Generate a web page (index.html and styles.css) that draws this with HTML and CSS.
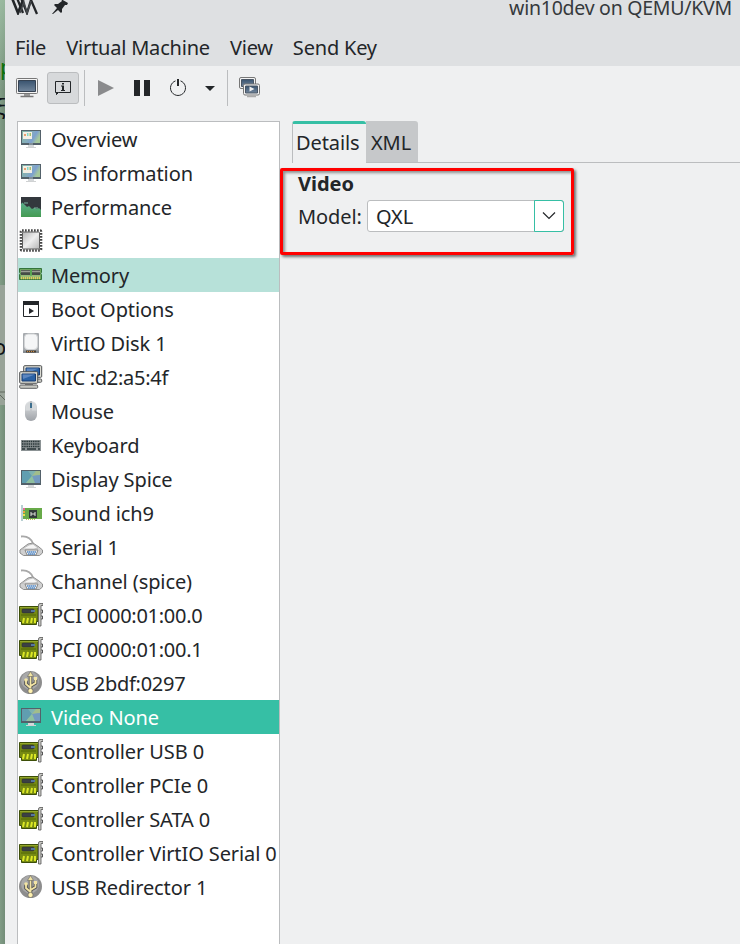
FILE: index.html
```html
<!DOCTYPE html>
<html lang="en">
<head>
<meta charset="utf-8">
<title>win10dev on QEMU/KVM</title>
<link rel="stylesheet" href="styles.css">
</head>
<body>
<svg class="defs" aria-hidden="true">
  <defs>
    <linearGradient id="screen" x1="0" y1="0" x2="1" y2="1"><stop offset="0" stop-color="#6aaab2"/><stop offset=".5" stop-color="#86b5b0"/><stop offset="1" stop-color="#9178ad"/></linearGradient>
    <linearGradient id="wide" x1="0" y1="0" x2="1" y2=".4"><stop offset="0" stop-color="#7fb4a4"/><stop offset=".5" stop-color="#86aebb"/><stop offset=".75" stop-color="#7da0d0"/><stop offset="1" stop-color="#a5c89c"/></linearGradient>
    <linearGradient id="blue" x1="0" y1="0" x2="0" y2="1"><stop offset="0" stop-color="#39536f"/><stop offset="1" stop-color="#71859b"/></linearGradient>
    <linearGradient id="metal" x1="0" y1="0" x2="1" y2="1"><stop offset="0" stop-color="#b5b5b5"/><stop offset=".5" stop-color="#eee"/><stop offset="1" stop-color="#b5b5b5"/></linearGradient>
    <linearGradient id="perf" x1="0" y1="0" x2="0" y2="1"><stop offset="0" stop-color="#5cae8d"/><stop offset="1" stop-color="#449b52"/></linearGradient>
    <linearGradient id="mouse" x1="0" y1="0" x2="0" y2="1"><stop offset="0" stop-color="#e3e5e7"/><stop offset="1" stop-color="#9fa3a8"/></linearGradient>
    <symbol id="i-display" viewBox="0 0 24 24">
      <path d="M2 3h20v15H2z" fill="#53616a"/><path d="M3 4h18v12H3z" fill="url(#screen)"/>
      <path d="M3 4h6l4 5-6 7H3z" fill="#609eb0"/><path d="M13 9l4-5h4v4z" fill="#a2bd8b"/><path d="M13 9l8-1v8h-5z" fill="#749ac0"/><path d="M13 9l3 7H7z" fill="#8fc0a0"/>
      <path d="M9 18h6v2H9z" fill="#d5d8da"/><path d="M7 20h10v1H7z" fill="#d0d2d3"/>
    </symbol>
    <symbol id="i-overview" viewBox="0 0 24 24">
      <path d="M2 3h20v15H2z" fill="#53616a"/><path d="M3 4h18v12H3z" fill="url(#wide)"/><path d="M10 17h4" stroke="#aebdc4"/>
      <path d="M9 18h6v2H9z" fill="#d5d8da"/><path d="M7 20h10v1H7z" fill="#d0d2d3"/>
      <path d="M4 5h9v7H4z" fill="#f3efe5"/><path d="M5 7h2v2H5z" fill="#e8a070"/><path d="M8 6h1.500v3H8z" fill="#82d7c9"/><path d="M10.500 6H12v3h-1.500z" fill="#a5c06c"/>
    </symbol>
    <symbol id="i-perf" viewBox="0 0 24 24">
      <path d="M2 2h20v20H2z" fill="#33383d"/><path d="M2 9l1.500-1.500L6 10l2 2 2-1 3 3 2-1 3 1 2-1 2 2v7H2z" fill="url(#perf)"/><path d="M6 7v2M8 7v2M16 12v2M18 12v2" stroke="#8fd0bb" stroke-width=".8"/>
    </symbol>
    <symbol id="i-cpu" viewBox="0 0 24 24">
      <rect x="2" y="1.500" width="20" height="20" rx="1" fill="none" stroke="#454545" stroke-width="2.600" stroke-dasharray="1.700 1.300"/><rect x="3.500" y="3" width="17" height="17" rx="1" fill="url(#metal)" stroke="#5c5c5c"/>
    </symbol>
    <symbol id="i-memory" viewBox="0 0 24 24">
      <path d="M.5 5.500h22v4l-.7 1 .7 1v5H.5v-5l.7-1-.7-1z" fill="#6fa560" stroke="#34743b"/><path d="M2 7h9v5H2zM13 7h8v5h-8z" fill="#454c46"/><path d="M2 8.500h9M13 8.500h8" stroke="#9c9f96" stroke-width="1.500"/><path d="M2 15h19" stroke="#e0cc60" stroke-width="2.500" stroke-dasharray="1.300 .7"/><path d="M2 13h19" stroke="#b9cf91"/><path d="M12 6v7" stroke="#40a744"/>
    </symbol>
    <symbol id="i-boot" viewBox="0 0 24 24"><path d="M4.500 4.500h15v15h-15z" fill="none" stroke="#232629"/><path d="M4 4h16v4H4z" fill="#232629"/><path d="M10 11v6l5-3z" fill="#232629"/></symbol>
    <symbol id="i-disk" viewBox="0 0 24 24"><rect x="4" y="2" width="16" height="20" rx="1" fill="#a7abaf"/><rect x="5.500" y="3" width="13" height="15.500" rx="3.500" fill="#f5f6f7" stroke="#d2d4d6"/><path d="M4 19.500h16V22H4z" fill="#858b91"/><path d="M7 19.500h10v2H7z" fill="#493f35"/><path d="M8 20.500h8" stroke="#cf8b3f" stroke-dasharray="1 1"/></symbol>
    <symbol id="i-pc" viewBox="0 0 20 18"><rect x=".7" y=".7" width="18" height="11.600" rx="1" fill="#dcdcd4" stroke="#4d4f51"/><path d="M3 3h13.500v7H3z" fill="#2b62a5" stroke="#173b70"/><path d="M3.500 3.500h12.500L4 8z" fill="#5d87c0"/><path d="M6 12h8v2H6z" fill="#777"/><rect x=".7" y="14" width="18" height="3.300" rx="1" fill="#c8c8c2" stroke="#5d5f61"/></symbol>
    <symbol id="i-nic" viewBox="0 0 24 24"><use href="#i-pc" x="4" y="0" width="20" height="18"/><use href="#i-pc" x="0" y="6" width="20" height="18"/></symbol>
    <symbol id="i-mouse" viewBox="0 0 24 24"><rect x="6" y="2" width="12" height="20" rx="6" fill="url(#mouse)"/><path d="M8 5l3-2.500v9H6.500V8zM13 2.500L16 5l1.500 3v3.500H13z" fill="#d6d9db"/><path d="M12 2v7" stroke="#8b9196"/><path d="M11 4h2v5h-2z" fill="#3e6f8e"/></symbol>
    <symbol id="i-keyboard" viewBox="0 0 24 24"><path d="M2 7h20v11H2z" fill="#8c9395"/><path d="M3 8.500h18M3 11h18M3 13.500h18" stroke="#293638" stroke-width="1.700" stroke-dasharray="1.500 .7"/><path d="M3 16h3m2 0h9m2 0h2" stroke="#293638" stroke-width="1.700"/></symbol>
    <symbol id="i-sound" viewBox="0 0 24 24"><path d="M2 4h2v16H2z" fill="#b8d0d2"/><path d="M4 7h19v11H4z" fill="#68aa49"/><path d="M4 7h2v2H4z" fill="#e56b97"/><path d="M4 10h2v2H4z" fill="#f0a43b"/><path d="M4 13h2v2H4z" fill="#f0e04b"/><path d="M10 9h8v8h-8z" fill="#313b39"/><path d="M12 11v4m4-4v4M12 13h4" stroke="#e2e5df"/><path d="M7 18.500h10" stroke="#c1bd5c" stroke-dasharray="1 1"/></symbol>
    <symbol id="i-serial" viewBox="0 0 24 24"><path d="M2 1.500q9-1 12 7" fill="none" stroke="#a8a8a8" stroke-width="1.800"/><path d="M1 15l8-6 5-1 6 4 3.500 3v3l-3 2.500h-16L1 18z" fill="#d0d0d0" stroke="#8d8d8d"/><path d="M3 14l7-4 4-1 5 4-4 1H7z" fill="#f5f5f5" stroke="#b0b0b0" stroke-width=".7"/><path d="M6 15h13l-2 5H8z" fill="#f2f2f2" stroke="#888"/><path d="M8 17h9M9 19h7" stroke="#4e86c6" stroke-width="1.500" stroke-dasharray="1.500 .4"/></symbol>
    <symbol id="i-pci" viewBox="0 0 24 24"><path d="M.5 3.500H19v15h-1.500v3h-15v-3h-2z" fill="#768a13" stroke="#3d4f08"/><path d="M1 4.500h18" stroke="#93a62a"/><rect x="3" y="6" width="12" height="4" rx="1" fill="#3b4043" stroke="#262b2c" stroke-width=".5"/><path d="M12 8h4" stroke="#55779b" stroke-width="2"/><path d="M2 12h15" stroke="#4f6507"/><path d="M4 20l1-5M8 20l1-5m3 5l1-5m3 5v-5" stroke="#dce825" stroke-width="2"/><path d="M19.500 23V2q0-1.500 1.500-1.500h3v2h-2V23z" fill="#c9c9c4" stroke="#555" stroke-width=".8"/><path d="M22 7h1.500v3H22m0 3h1.500v3H22" fill="none" stroke="#555"/></symbol>
    <symbol id="i-usb" viewBox="0 0 24 24"><circle cx="11.500" cy="11.500" r="11.500" fill="#8d8d8d"/><circle cx="11" cy="9.500" r="9" fill="#a8a8a8"/><g fill="none" stroke="#515151" stroke-width="3.600"><path d="M11.500 4v17M11.500 17L7 13V9m4.500 6l5-3V8"/></g><g fill="none" stroke="#f3e5a4" stroke-width="1.800"><path d="M11.500 4v17M11.500 17L7 13V9m4.500 6l5-3V8"/></g><path d="M8.500 5.500l3-5 3 5z" fill="#f3e5a4" stroke="#555" stroke-width=".5"/><circle cx="11.500" cy="20" r="2.500" fill="#fff1b0" stroke="#555" stroke-width=".5"/><circle cx="7" cy="9" r="1.800" fill="#f3e5a4"/><path d="M15 6h3v3h-3z" fill="#f3e5a4"/></symbol>
    <symbol id="i-monitor" viewBox="0 0 22 20"><rect x=".5" y=".5" width="21" height="15" rx="1" fill="#f4f4f4" stroke="#777"/><path d="M2.500 2.500h17v11h-17z" fill="url(#blue)" stroke="#354252"/><path d="M8 16h6v2H8z" fill="#999"/><path d="M4.500 18.500h13" stroke="#777" stroke-width="1.500"/></symbol>
    <symbol id="i-small" viewBox="0 0 17 14"><rect x=".5" y=".5" width="16" height="11" rx="1.500" fill="#f4f4f4" stroke="#777"/><path d="M2.500 2.500h12v7h-12z" fill="url(#blue)" stroke="#4a5665"/><path d="M4 13h9" stroke="#aaa" stroke-width="1.500"/></symbol>
  </defs>
</svg>
<div class="desktop">
  <aside class="backdrop"><span class="glyph green">p</span><span class="glyph dark">ξ</span><div class="pane"><span class="glyph letter">o</span><svg width="5" height="12"><path d="M0 3h5M0 6l5 5" stroke="#61685f" fill="none"/></svg></div></aside>
  <main class="window">
    <header class="titlebar">
      <svg class="logo" width="28" height="15" viewBox="0 0 28 15"><path d="M1-2l6 15 5-13" fill="none" stroke="#232629" stroke-width="2.600"/><path d="M6-2l6 15M10-2l6 15 4-13 6 14" fill="none" stroke="#232629" stroke-width="2.300"/><path d="M9 13l4-11 3 11 4-12" fill="none" stroke="#44484b" stroke-width="1.400"/></svg>
      <svg class="pin" width="16" height="15" viewBox="0 0 16 15"><path d="M9-1l7 4-1 2h-2l-3 4v3l-1 1-3-3-5 4H0l5-6-3-3 1-1h3l4-3z" fill="#232629"/></svg>
      <h1>win10dev on QEMU/KVM</h1>
    </header>
    <nav class="menu"><span>File</span><span>Virtual Machine</span><span>View</span><span>Send Key</span></nav>
    <div class="toolbar">
      <svg class="console" width="22" height="20"><use href="#i-monitor"/></svg>
      <button class="info" aria-label="Details"><svg width="18" height="18" viewBox="0 0 18 18"><path d="M1.500 2.500h15v11h-12l-2 2v-2h-1z" fill="none" stroke="#232629"/><path d="M2 13v3l3-3z" fill="#232629"/><path d="M8 4h2v1.500H8zM7 6.500h3V11h1v1H7v-1h1V7.500H7z" fill="#232629"/></svg></button>
      <span class="rule"></span>
      <svg class="play" width="16" height="16"><path d="M0 0l16 8-16 8z" fill="#8a8b8d"/></svg>
      <svg class="pause" width="16" height="16"><path d="M0 0h6v16H0zM10 0h6v16h-6z" fill="#232629"/></svg>
      <svg class="power" width="18" height="18"><path d="M6.500 1.900a7.500 7.500 0 1 0 5 0" fill="none" stroke="#232629"/><path d="M9 0v7" stroke="#232629" stroke-width="2"/></svg>
      <svg class="caret" width="10" height="5"><path d="M0 0h10L5 5z" fill="#232629"/></svg>
      <span class="rule"></span>
      <svg class="screens" width="22" height="22" viewBox="0 0 22 22"><use href="#i-small" x="0" y="0" width="17" height="14"/><use href="#i-small" x="4" y="6" width="17" height="15"/><path d="M10.500 9.500v5l5-2.500z" fill="#eee"/></svg>
    </div>
    <div class="content">
      <ul class="devices">
        <li><svg><use href="#i-overview"/></svg>Overview</li>
        <li><svg><use href="#i-overview"/></svg>OS information</li>
        <li><svg><use href="#i-perf"/></svg>Performance</li>
        <li><svg><use href="#i-cpu"/></svg>CPUs</li>
        <li class="hover"><svg><use href="#i-memory"/></svg>Memory</li>
        <li><svg><use href="#i-boot"/></svg>Boot Options</li>
        <li><svg><use href="#i-disk"/></svg>VirtIO Disk 1</li>
        <li class="digits"><svg><use href="#i-nic"/></svg>NIC :d2:a5:4f</li>
        <li><svg><use href="#i-mouse"/></svg>Mouse</li>
        <li><svg><use href="#i-keyboard"/></svg>Keyboard</li>
        <li><svg><use href="#i-display"/></svg>Display Spice</li>
        <li><svg><use href="#i-sound"/></svg>Sound ich9</li>
        <li><svg><use href="#i-serial"/></svg>Serial 1</li>
        <li><svg><use href="#i-serial"/></svg>Channel (spice)</li>
        <li class="digits"><svg><use href="#i-pci"/></svg>PCI 0000:01:00.0</li>
        <li class="digits"><svg><use href="#i-pci"/></svg>PCI 0000:01:00.1</li>
        <li class="digits"><svg><use href="#i-usb"/></svg>USB 2bdf:0297</li>
        <li class="selected"><svg><use href="#i-display"/></svg>Video None</li>
        <li><svg><use href="#i-pci"/></svg>Controller USB 0</li>
        <li><svg><use href="#i-pci"/></svg>Controller PCIe 0</li>
        <li><svg><use href="#i-pci"/></svg>Controller SATA 0</li>
        <li><svg><use href="#i-pci"/></svg>Controller VirtIO Serial 0</li>
        <li><svg><use href="#i-usb"/></svg>USB Redirector 1</li>
      </ul>
      <section class="details">
        <div class="tabs"><span class="tab active">Details</span><span class="tab">XML</span></div>
        <div class="callout">
          <h2>Video</h2>
          <div class="field"><label>Model:</label><div class="combo"><span class="value">QXL</span><span class="arrow"><svg width="14" height="8"><path d="M1 .5l6 6 6-6" fill="none" stroke="#232629" stroke-width="1.200"/></svg></span></div></div>
        </div>
      </section>
    </div>
  </main>
</div>
</body>
</html>
```
FILE: styles.css
```css
* { box-sizing: border-box; }
body { margin: 0; font: 20px/34px "Noto Sans", sans-serif; letter-spacing: -.1px; color: #232629; background: #eff0f1; }
svg { display: block; flex: none; }
.defs { position: absolute; width: 0; height: 0; }
.desktop { display: flex; width: 740px; height: 944px; overflow: hidden; }
.backdrop { display: flex; flex-direction: column; width: 5px; flex: none; overflow: hidden; background: linear-gradient(#a3c4a9c0, #a3c4a900 90px), linear-gradient(90deg, #819c86, #738d78); }
.glyph { display: block; flex: none; height: 34px; font-size: 22px; color: #101418; }
.green { margin-top: 49px; color: #087008; }
.dark { margin-top: 6px; text-indent: -5px; }
.pane { height: 120px; margin-top: 162px; padding-top: 44px; flex: none; background: #98a398; }
.letter { text-indent: -7px; }
.pane svg { margin-top: 26px; }
.window { display: flex; flex-direction: column; flex: 1; min-width: 0; background: #eff0f1; }
.titlebar { display: flex; height: 31px; background: #dee0e2; padding-left: 6px; flex: none; }
.pin { margin-left: 13px; }
h1 { margin: -9px 8px 0 auto; font-size: 19.5px; line-height: 34px; font-weight: 400; letter-spacing: -.25px; color: #35393c; }
.menu { display: flex; gap: 20px; height: 35px; padding-left: 10px; background: #dee0e2; letter-spacing: -.2px; flex: none; }
.toolbar { display: flex; align-items: center; height: 44px; padding-left: 11px; flex: none; }
.info { display: flex; align-items: center; justify-content: center; width: 32px; height: 32px; margin: 0 5px 0 9px; padding: 0; border: 1px solid #bbbdbf; border-radius: 3px; background: #d7d9db; }
.rule { width: 1px; height: 36px; background: #bbbdbf; }
.play { margin-left: 13px; }
.pause { margin-left: 20px; }
.power { margin-left: 19px; }
.caret { margin: 1px 12px 0 18px; }
.screens { margin-left: 11px; }
.content { display: flex; height: 834px; padding: 11px 0 0 12px; }
.devices { width: 263px; margin: 0; padding: 0; border: 1px solid #bbbdbf; border-top-width: 1px; border-bottom: 0; background: #fff; list-style: none; flex: none; white-space: nowrap; }
.devices li { display: flex; height: 34px; gap: 8px; padding-left: 1px; line-height: 36px; }
.devices svg { width: 24px; height: 24px; margin-top: 5px; }
.devices .digits { letter-spacing: -.27px; }
.devices .hover { background: #b7e1d9; }
.devices .selected { background: #36bfa5; color: #fff; }
.details { flex: 1; }
.tabs { display: flex; height: 42px; margin-left: 12px; border-bottom: 1px solid #bbbdbf; }
.tab { height: 41px; width: 52px; padding: 4px 0 0 5px; background: #c6c8ca; border-radius: 0 3px 0 0; line-height: 35px; }
.tab.active { width: 74px; height: 42px; padding: 1px 0 0 3px; border-top: 3px solid #36bfa5; border-left: 1px solid #bbbdbf; border-radius: 3px 3px 0 0; background: #eff0f1; }
.callout { width: 294px; height: 87px; margin-top: 5px; padding: 0 0 0 15px; border: 3px solid #f00; border-radius: 2px; box-shadow: 2px 2px 3px #0008, inset 2px 2px 3px #0006; }
h2 { margin: 0; font-size: 20px; line-height: 26px; letter-spacing: 0; }
.field { display: flex; height: 32px; margin-top: 3px; }
.field label { width: 69px; }
.combo { display: flex; width: 197px; height: 32px; border: 1px solid #bbbdbf; border-radius: 3px; background: #fff; line-height: 32px; }
.value { flex: 1; padding-left: 8px; }
.arrow { display: flex; align-items: center; justify-content: center; width: 30px; margin: -1px; border: 1px solid #36bfa5; border-radius: 0 3px 3px 0; }
```
